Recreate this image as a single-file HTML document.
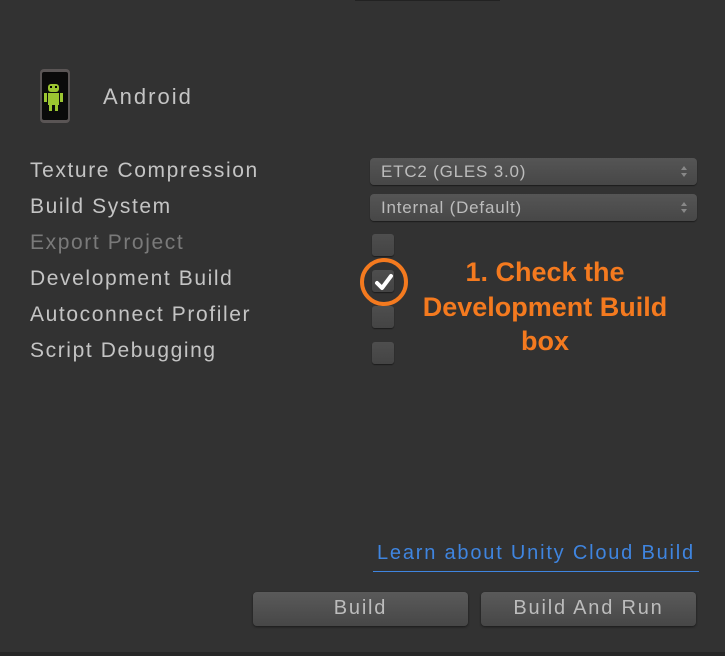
<!DOCTYPE html>
<html><head><style>
body{margin:0;width:725px;height:656px;background:#323232;position:relative;overflow:hidden;font-family:"Liberation Sans",sans-serif;}
.a{position:absolute}
.lbl{position:absolute;left:30px;font-size:21px;color:#c4c4c4;letter-spacing:1.6px;line-height:24px}
.dd{position:absolute;left:370px;width:327px;height:27px;border-radius:4px;background:linear-gradient(#555,#474747);box-shadow:0 1px 1px #1c1c1c;color:#bcbcbc;font-size:17px;line-height:27px;letter-spacing:0.8px;box-sizing:border-box;padding-left:11px}
.dd:after{content:"";position:absolute;right:10px;top:8px;width:0;height:0;border-left:3px solid transparent;border-right:3px solid transparent;border-bottom:4px solid #888}
.dd:before{content:"";position:absolute;right:10px;top:15px;width:0;height:0;border-left:3px solid transparent;border-right:3px solid transparent;border-top:4px solid #888}
.cb{position:absolute;left:372px;width:22px;height:22px;border-radius:3px;background:linear-gradient(#4e4e4e,#444);box-shadow:0 1px 1px #1c1c1c}
.btn{position:absolute;top:592px;height:34px;border-radius:4px;background:linear-gradient(#5a5a5a,#474747);box-shadow:0 1px 2px #1a1a1a;color:#bcbcbc;font-size:20px;line-height:32px;text-align:center;letter-spacing:1.8px}
.ann{position:absolute;left:395px;width:300px;text-align:center;color:#f47a1f;font-weight:bold;font-size:27px;line-height:34.5px}
</style></head><body>
<div class="a" style="left:355px;top:0;width:145px;height:1px;background:#222"></div>
<div class="a" style="left:0;top:652px;width:725px;height:4px;background:#262626"></div>
<svg class="a" style="left:38px;top:68px" width="34" height="56" viewBox="0 0 34 56">
<rect x="2" y="1" width="30" height="54" rx="4" fill="#5a5555"/>
<rect x="4" y="4" width="26" height="48" rx="2" fill="#0a0a0a"/>
<rect x="10" y="16" width="11" height="8" rx="3" fill="#9bc531"/>
<rect x="10" y="25" width="11" height="12" fill="#9bc531"/>
<rect x="6" y="25" width="3" height="9" fill="#9bc531"/>
<rect x="22" y="25" width="3" height="9" fill="#9bc531"/>
<rect x="11" y="37" width="3" height="6" fill="#9bc531"/>
<rect x="17" y="37" width="3" height="6" fill="#9bc531"/>
<rect x="12" y="18" width="2" height="2" fill="#000"/><rect x="17" y="18" width="2" height="2" fill="#000"/>
</svg>
<div class="a" style="left:103px;top:84px;font-size:22px;color:#c4c4c4;letter-spacing:2px">Android</div>
<div class="lbl" style="top:159px">Texture Compression</div>
<div class="lbl" style="top:195px">Build System</div>
<div class="lbl" style="top:231px;color:#7a7a7a">Export Project</div>
<div class="lbl" style="top:267px">Development Build</div>
<div class="lbl" style="top:303px">Autoconnect Profiler</div>
<div class="lbl" style="top:339px">Script Debugging</div>
<div class="dd" style="top:158px">ETC2 (GLES 3.0)</div>
<div class="dd" style="top:194px">Internal (Default)</div>
<div class="cb" style="top:234px"></div>
<div class="cb" style="top:270px"></div>
<div class="cb" style="top:306px"></div>
<div class="cb" style="top:342px"></div>
<svg class="a" style="left:356px;top:254px" width="56" height="56">
<circle cx="28" cy="28" r="22" fill="none" stroke="#f47a1f" stroke-width="4"/>
<path d="M21 29 L26 34 L35 22" fill="none" stroke="#fff" stroke-width="4" stroke-linecap="round" stroke-linejoin="round"/>
</svg>
<div class="ann" style="top:255px">1. Check the<br>Development Build<br>box</div>
<div class="a" style="left:377px;top:542px;font-size:20px;color:#3f85e0;letter-spacing:1.8px">Learn about Unity Cloud Build</div>
<div class="a" style="left:373px;top:571px;width:326px;height:1px;background:#3f85e0"></div>
<div class="btn" style="left:253px;width:215px">Build</div>
<div class="btn" style="left:481px;width:215px">Build And Run</div>
</body></html>
